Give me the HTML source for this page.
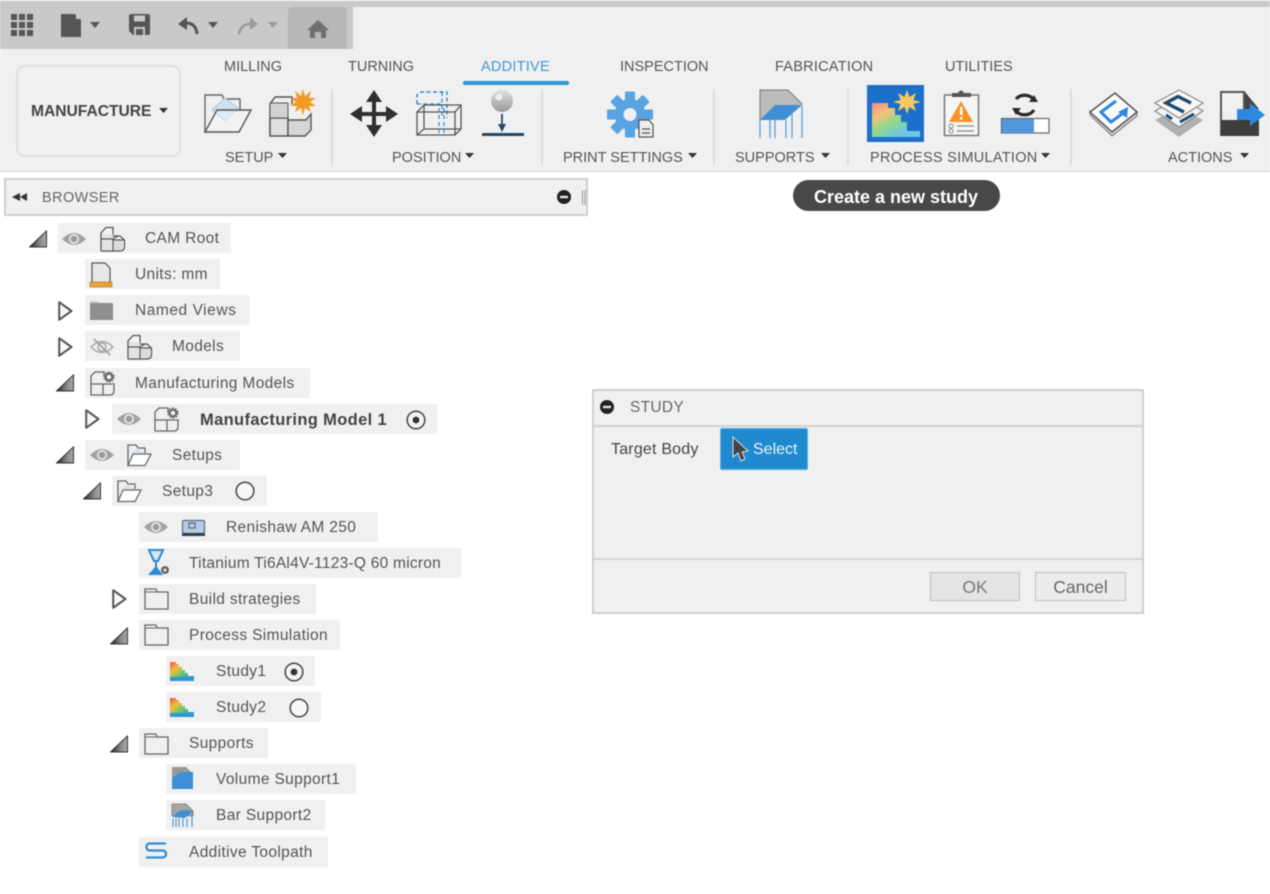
<!DOCTYPE html>
<html><head><meta charset="utf-8"><title>Manufacture - Additive</title>
<style>
html,body{margin:0;padding:0;background:#fff}
#w{position:relative;width:1270px;height:894px;overflow:hidden;background:#fff;font-family:"Liberation Sans",Arial,sans-serif;color:#555;font-size:14.5px;filter:blur(.45px)}
#w div{position:absolute;box-sizing:border-box}
.l{white-space:nowrap;line-height:18px;color:#555}
.r{background:#f0f0f0;height:30px}
.r span{position:absolute;top:1px;line-height:30px;white-space:nowrap;color:#555;font-size:15.5px;letter-spacing:.35px}
svg{position:absolute;left:0;top:0}
</style></head><body><div id="w">
<div style="left:0;top:0;width:1270px;height:172px;background:#f0f0f0;border-bottom:1px solid #d2d2d2"></div>
<div style="left:0;top:1px;width:1270px;height:6px;background:#c9c9c9"></div>
<div style="left:0;top:1px;width:353px;height:48px;background:#c9c9c9"></div>
<div style="left:288px;top:7px;width:59px;height:42px;background:#b7b7b7;border-radius:4px 4px 0 0"></div>
<div style="left:16px;top:65px;width:165px;height:92px;border:2px solid #dedede;border-radius:9px"></div>
<div class="l" style="left:31px;top:103px;font-weight:bold;font-size:15.6px;color:#444">MANUFACTURE</div>
<div class="l" style="left:224px;top:58px">MILLING</div>
<div class="l" style="left:348px;top:58px">TURNING</div>
<div class="l" style="left:481px;top:58px;color:#3d9ad6;letter-spacing:.25px">ADDITIVE</div>
<div style="left:463px;top:81px;width:106px;height:4px;background:#2e97d4;border-radius:2px"></div>
<div class="l" style="left:620px;top:58px">INSPECTION</div>
<div class="l" style="left:775px;top:58px;letter-spacing:.25px">FABRICATION</div>
<div class="l" style="left:945px;top:58px">UTILITIES</div>
<div class="l" style="left:225px;top:149px">SETUP</div>
<div class="l" style="left:392px;top:149px">POSITION</div>
<div class="l" style="left:563px;top:149px">PRINT SETTINGS</div>
<div class="l" style="left:735px;top:149px">SUPPORTS</div>
<div class="l" style="left:870px;top:149px;letter-spacing:.28px">PROCESS SIMULATION</div>
<div class="l" style="left:1168px;top:149px">ACTIONS</div>
<div style="left:4px;top:178px;width:584px;height:38px;background:#f0f0f0;border:2px solid #cfcfcf"></div>
<div class="l" style="left:42px;top:189px;color:#666;letter-spacing:.4px">BROWSER</div>
<div style="left:793px;top:180px;width:207px;height:31px;background:#484848;border-radius:16px"></div>
<div class="l" style="left:814px;top:188px;color:#fff;font-weight:bold;font-size:18px">Create a new study</div>

<div class="r" style="left:58px;top:223px;width:173px"><span style="left:87px">CAM Root</span></div>
<div class="r" style="left:85px;top:259px;width:135px"><span style="left:50px">Units: mm</span></div>
<div class="r" style="left:85px;top:295px;width:165px"><span style="left:50px;letter-spacing:.55px">Named Views</span></div>
<div class="r" style="left:85px;top:331px;width:155px"><span style="left:87px">Models</span></div>
<div class="r" style="left:85px;top:368px;width:225px"><span style="left:50px">Manufacturing Models</span></div>
<div class="r" style="left:112px;top:404px;width:325px"><span style="left:88px;font-weight:bold;color:#444;font-size:16.5px;letter-spacing:.35px">Manufacturing Model 1</span></div>
<div class="r" style="left:85px;top:440px;width:155px"><span style="left:87px">Setups</span></div>
<div class="r" style="left:112px;top:476px;width:155px"><span style="left:50px">Setup3</span></div>
<div class="r" style="left:139px;top:512px;width:239px"><span style="left:87px">Renishaw AM 250</span></div>
<div class="r" style="left:139px;top:548px;width:322px"><span style="left:50px;letter-spacing:.25px">Titanium Ti6Al4V-1123-Q 60 micron</span></div>
<div class="r" style="left:139px;top:584px;width:177px"><span style="left:50px">Build strategies</span></div>
<div class="r" style="left:139px;top:620px;width:201px"><span style="left:50px">Process Simulation</span></div>
<div class="r" style="left:166px;top:656px;width:149px"><span style="left:50px">Study1</span></div>
<div class="r" style="left:166px;top:692px;width:155px"><span style="left:50px">Study2</span></div>
<div class="r" style="left:139px;top:728px;width:129px"><span style="left:50px">Supports</span></div>
<div class="r" style="left:166px;top:764px;width:190px"><span style="left:50px">Volume Support1</span></div>
<div class="r" style="left:166px;top:800px;width:159px"><span style="left:50px">Bar Support2</span></div>
<div class="r" style="left:139px;top:837px;width:189px"><span style="left:50px">Additive Toolpath</span></div>

<div style="left:592px;top:389px;width:552px;height:225px;background:#f0f0f0;border:2px solid #d0d0d0"></div>
<div style="left:594px;top:425px;width:548px;height:2px;background:#d0d0d0"></div>
<div style="left:594px;top:558px;width:548px;height:2px;background:#d4d4d4"></div>
<div class="l" style="left:630px;top:399px;color:#666;font-size:15.5px;letter-spacing:.3px">STUDY</div>
<div class="l" style="left:611px;top:441px;color:#444;font-size:16px;letter-spacing:.2px">Target Body</div>
<div style="left:720px;top:428px;width:88px;height:42px;background:#1f8ad0;border-radius:2px;border:1px solid #5aaee0"></div>
<div class="l" style="left:753px;top:441px;color:#e8f4fc;font-size:16px">Select</div>
<div style="left:930px;top:572px;width:90px;height:29px;background:#e4e4e4;border:1px solid #bdbdbd;text-align:center;line-height:28px;font-size:17.5px;color:#777">OK</div>
<div style="left:1035px;top:572px;width:91px;height:29px;background:#ececec;border:1px solid #bdbdbd;text-align:center;line-height:28px;font-size:17.5px;color:#666">Cancel</div>

<svg width="1270" height="894" viewBox="0 0 1270 894" xmlns="http://www.w3.org/2000/svg">
<defs>
<linearGradient id="tg2" x1="0" y1="0" x2="1" y2="0"><stop offset="0" stop-color="#222"/><stop offset=".6" stop-color="#888"/><stop offset="1" stop-color="#aaa"/></linearGradient>
<linearGradient id="st" x1="0" y1="0" x2="1" y2="1"><stop offset="0" stop-color="#e8524a"/><stop offset=".3" stop-color="#f0c040"/><stop offset=".55" stop-color="#6cc66a"/><stop offset=".85" stop-color="#2c9ad8"/></linearGradient>
<linearGradient id="big" x1="0" y1="0" x2=".8" y2="1"><stop offset="0" stop-color="#f58a80"/><stop offset=".3" stop-color="#f7c27a"/><stop offset=".55" stop-color="#8fd88a"/><stop offset=".85" stop-color="#70c6e8"/></linearGradient>
<linearGradient id="ball" x1="0" y1="0" x2="0" y2="1"><stop offset="0" stop-color="#e0e0e0"/><stop offset="1" stop-color="#9a9a9a"/></linearGradient>
<symbol id="exp" width="18" height="18" viewBox="0 0 18 18"><path d="M.5 17H17.500V.8Z" fill="url(#tg2)" stroke="#333" stroke-width="1" stroke-linejoin="round"/></symbol>
<symbol id="col" width="15" height="20" viewBox="0 0 15 20"><path d="M1.200 1.200L13.500 10L1.200 18.800Z" fill="#f8f8f8" stroke="#555" stroke-width="2" stroke-linejoin="round"/></symbol>
<symbol id="eye" width="24" height="16" viewBox="0 0 24 16"><path d="M0 8Q12 -4 24 8Q12 20 0 8Z" fill="#a3a3a3"/><circle cx="12" cy="8" r="5" fill="#e6e6e6"/><circle cx="12" cy="8" r="3.200" fill="#999"/></symbol>
<symbol id="eyeoff" width="24" height="18" viewBox="0 0 24 18"><path d="M1 9Q12 -2 23 9Q12 20 1 9Z" fill="none" stroke="#a8a8a8" stroke-width="1.500"/><circle cx="12" cy="9" r="4" fill="none" stroke="#a8a8a8" stroke-width="1.500"/><path d="M4 1L20 17" stroke="#a0a0a0" stroke-width="1.600"/></symbol>
<symbol id="cube" width="26" height="26" viewBox="0 0 26 26"><path d="M1 25V7L6 1.500H13V11" fill="#f4f4f4" stroke="#555" stroke-width="1.300"/><path d="M2 8H13V13H2Z" fill="#e4e4e4"/><path d="M2 14H12V24H2Z" fill="#e4e4e4"/><path d="M14 15H23V24H14Z" fill="#dcdcdc"/><path d="M1 25H20Q24.500 25 24.500 20V14L20 10H13M1 13H13V25M13 13L18 10M13 14H24" fill="none" stroke="#555" stroke-width="1.200"/></symbol>
<symbol id="mfg" width="25" height="25" viewBox="0 0 25 25"><path d="M1 24V5L5 1H14V6M1 13H23M13 13V24M1 24H20Q24 24 24 19V12" fill="none" stroke="#666" stroke-width="1.300"/><circle cx="19" cy="6" r="3.400" fill="none" stroke="#666" stroke-width="2.200"/><circle cx="19" cy="6" r="5" fill="none" stroke="#666" stroke-width="1.400" stroke-dasharray="1.600 1.600"/></symbol>
<symbol id="open" width="25" height="23" viewBox="0 0 25 23"><path d="M1 22V1H9L11 4H18V9" fill="none" stroke="#666" stroke-width="1.300"/><path d="M6 10H24L18 21.500H1Z" fill="#fff" stroke="#666" stroke-width="1.300"/><path d="M5 9L11 4L17 9" fill="#d7e4ef"/></symbol>
<symbol id="fold" width="25" height="22" viewBox="0 0 25 22"><path d="M1 21V1H12L13 4H24V21Z" fill="none" stroke="#666" stroke-width="1.300"/><path d="M1 4H13" stroke="#666" stroke-width="1"/></symbol>
<symbol id="study" width="25" height="19" viewBox="0 0 25 19"><path d="M0 0H6V2H9V5H12V8H15V11H18V14H24V19H0Z" fill="url(#st)"/><path d="M0 15H24V19H0Z" fill="#2d97cf"/></symbol>
<symbol id="ron" width="20" height="20" viewBox="0 0 20 20"><circle cx="10" cy="10" r="8.800" fill="#f4f4f4" stroke="#444" stroke-width="1.500"/><circle cx="10" cy="10" r="3.400" fill="#333"/></symbol>
<symbol id="roff" width="20" height="20" viewBox="0 0 20 20"><circle cx="10" cy="10" r="8.800" fill="#f8f8f8" stroke="#444" stroke-width="1.500"/></symbol>
<symbol id="minus" width="14" height="14" viewBox="0 0 14 14"><circle cx="7" cy="7" r="7" fill="#222"/><rect x="3" y="5.800" width="8" height="2.400" fill="#e6e6e6"/></symbol>
</defs>

<g fill="#555"><rect x="11" y="14" width="6" height="6"/><rect x="19" y="14" width="6" height="6"/><rect x="27" y="14" width="6" height="6"/><rect x="11" y="22" width="6" height="6"/><rect x="19" y="22" width="6" height="6"/><rect x="27" y="22" width="6" height="6"/><rect x="11" y="30" width="6" height="6"/><rect x="19" y="30" width="6" height="6"/><rect x="27" y="30" width="6" height="6"/>
<path d="M61 14H75L81 20V37H61Z"/><path d="M76 14L81 19H76Z" fill="#c9c9c9"/>
<path d="M90 22H100L95 28Z"/>
<path d="M129 16Q129 14 131 14H148Q150 14 150 16V33Q150 35 148 35H133L129 31Z"/></g>
<rect x="134" y="15.500" width="11" height="6" fill="#c9c9c9"/><path d="M135 35V28H144V35" fill="none" stroke="#c9c9c9" stroke-width="2"/>
<path d="M186 23Q196 23 197 34" fill="none" stroke="#555" stroke-width="3"/><path d="M187 17L178 24L187 30Z" fill="#555"/>
<path d="M208 22H218L213 28Z" fill="#555"/>
<path d="M250 17L258 24L250 30Z" fill="#9a9a9a"/><path d="M250 24Q241 24 239 34" fill="none" stroke="#9a9a9a" stroke-width="2.500"/>
<path d="M268 22H278L273 28Z" fill="#9a9a9a"/>
<path d="M318 20L329 30H326V38H321V32H315V38H310V30H307Z" fill="#6f6f6f"/>

<g fill="#333"><path d="M159 108H168L163.500 113Z"/><path d="M278 153H287L282.500 158Z"/><path d="M465 153H474L469.500 158Z"/><path d="M688 153H697L692.500 158Z"/><path d="M821 153H830L825.500 158Z"/><path d="M1041 153H1050L1045.500 158Z"/><path d="M1240 153H1249L1244.500 158Z"/></g>
<g fill="#dcdcdc"><rect x="331" y="89" width="2" height="76"/><rect x="541" y="89" width="2" height="76"/><rect x="713" y="89" width="2" height="76"/><rect x="847" y="89" width="2" height="76"/><rect x="1070" y="89" width="2" height="76"/></g>

<path d="M205 133V95H222L224 99H240V110" fill="none" stroke="#666" stroke-width="1.400"/>
<path d="M212 110L225 98L238 108L225 121Z" fill="#cfe0ee" stroke="#aac6dc" stroke-width="1"/>
<path d="M217 110H251L239 132H205Z" fill="#f4f4f4" fill-opacity=".55" stroke="#555" stroke-width="1.400"/>
<path d="M270 136V104L275 97H292V104" fill="none" stroke="#555" stroke-width="1.500"/>
<path d="M270 118H288V136H270Z" fill="#e0e0e0" stroke="#555" stroke-width="1.400"/>
<path d="M270 103H288V118H270Z" fill="#d2d2d2" stroke="#555" stroke-width="1"/>
<path d="M288 120H306L311 114V130L305 136H288Z" fill="#d6d6d6" stroke="#555" stroke-width="1.400"/>
<path d="M303 89L305 96L311 91L309 98L316 98L310 102L316 106L309 106L311 112L305 108L303 115L301 108L295 112L297 106L290 106L296 102L290 98L297 98L295 91L301 96Z" fill="#f39a22"/>

<g fill="#2f2f2f"><path d="M374 90L382 102H366Z"/><path d="M374 137L382 125H366Z"/><path d="M350 114L362 106V122Z"/><path d="M398 114L386 106V122Z"/><rect x="372" y="100" width="4" height="28"/><rect x="360" y="112" width="28" height="4"/></g>
<path d="M417 104V95L421 92H447V118" fill="none" stroke="#2b85d8" stroke-width="1.400" stroke-dasharray="4 2.500"/>
<path d="M442 92V116M417 104H442" fill="none" stroke="#2b85d8" stroke-width="1.200" stroke-dasharray="4 2.500"/>
<path d="M417 135V112L424 105H461V129L455 135ZM417 112H455V135M455 112L461 105M417 135L424 129H461M424 105V129" fill="none" stroke="#555" stroke-width="1.300"/>
<path d="M439 108V133M444 108V133" stroke="#2b85d8" stroke-width="1.200" stroke-dasharray="4 3"/>
<circle cx="502" cy="101" r="11" fill="url(#ball)"/><circle cx="499" cy="97" r="3.500" fill="#eee"/>
<path d="M502 114V128" stroke="#1d4a6c" stroke-width="1.800"/><path d="M498 124H506L502 132Z" fill="#1d4a6c"/><rect x="482" y="133" width="42" height="3" fill="#1d4a6c"/>

<g transform="translate(630 114.500)"><circle r="15.500" fill="#58a3e2"/><g fill="#58a3e2"><rect x="-5" y="-23" width="10" height="10" rx="1"/><rect x="-5" y="13" width="10" height="10" rx="1"/><rect x="-23" y="-5" width="10" height="10" rx="1"/><rect x="13" y="-5" width="10" height="10" rx="1"/><rect x="-5" y="-23" width="10" height="10" rx="1" transform="rotate(45)"/><rect x="-5" y="13" width="10" height="10" rx="1" transform="rotate(45)"/><rect x="-23" y="-5" width="10" height="10" rx="1" transform="rotate(45)"/><rect x="13" y="-5" width="10" height="10" rx="1" transform="rotate(45)"/></g><circle r="6.500" fill="#f0f0f0"/></g>
<path d="M639 120H649L653 125V137H639Z" fill="#eee" stroke="#555" stroke-width="1.200"/><path d="M642 129H650M642 133H650" stroke="#555" stroke-width="1.200"/>

<path d="M760 90H788L802 104L785 119H760Z" fill="#bcbcbc" stroke="#777" stroke-width="1"/>
<path d="M775 105H802L785 120H760Z" fill="#3e8fd6"/>
<g stroke="#5ba6df" stroke-width="1.400" fill="none"><path d="M760 120V138M770 120V138M775 120V138M786 120V138M802 106V138M792 114V138"/></g>

<rect x="867" y="85" width="57" height="57" fill="#1d70c9"/>
<path d="M872 103H888V108H895V115H901V122H907V131H920V137H872Z" fill="url(#big)"/>
<path d="M907 90L909.500 97L916 93L913.500 100L921 102L913.500 104L916 111L909.500 107L907 114L904.500 107L898 111L900.500 104L893 102L900.500 100L898 93L904.500 97Z" fill="#f6c862"/><circle cx="907" cy="102" r="5" fill="#f6c862"/>
<rect x="944.500" y="95" width="34" height="40.500" fill="#f5f5f5" stroke="#777" stroke-width="1.500"/>
<path d="M952 97V93H958Q961 88 964 93H971V97Z" fill="#555"/>
<path d="M961 101L973 122H949Z" fill="#f4952a"/><rect x="960" y="107" width="2.500" height="8" fill="#fff"/><rect x="960" y="117" width="2.500" height="2.500" fill="#fff"/>
<path d="M957 126H974M957 131H974" stroke="#888" stroke-width="1.200"/><circle cx="951" cy="126" r="2" fill="none" stroke="#888"/><circle cx="951" cy="131" r="2" fill="none" stroke="#888"/>
<path d="M1016 99A11 10 0 0 1 1034 100M1034 110A11 10 0 0 1 1016 111" fill="none" stroke="#2a2a2a" stroke-width="3.200"/><path d="M1029 102H1038L1034 95Z" fill="#2a2a2a"/><path d="M1012 108H1021L1016 115Z" fill="#2a2a2a"/>
<rect x="1001.500" y="118.500" width="47.500" height="14.500" fill="#fff" stroke="#666" stroke-width="1.200"/><rect x="1002" y="119" width="32" height="14" fill="#5299dc"/>

<path d="M1090 115L1112 136L1137 116V112L1112 131L1090 111Z" fill="#d0d0d0" stroke="#777" stroke-width="1"/>
<path d="M1090 112L1115 93L1137 112L1112 132Z" fill="#fafafa" stroke="#555" stroke-width="1.500" stroke-linejoin="round"/>
<path d="M1116 101L1101 112L1111 122L1122 114" fill="none" stroke="#2e86e0" stroke-width="3"/><path d="M1128 107L1127 118L1118 112Z" fill="#2e86e0"/>
<path d="M1155 120L1179 108L1203 120L1179 137Z" fill="#b0b0b0"/>
<path d="M1155 111L1179 97L1203 111L1179 127Z" fill="#f4f4f4" stroke="#888" stroke-width="1.200"/>
<path d="M1155 103L1179 90L1203 103L1179 118Z" fill="#f8f8f8" stroke="#888" stroke-width="1.200"/>
<path d="M1191 103L1178 96.500L1166 103L1184 112" fill="none" stroke="#1d4a6c" stroke-width="3.400"/>
<path d="M1166 115L1172 119M1180 122L1194 114" fill="none" stroke="#1d4a6c" stroke-width="3"/>
<path d="M1221 136V92H1244V118" fill="none" stroke="#555" stroke-width="2"/><path d="M1245 92L1259 109H1245Z" fill="#444"/>
<path d="M1221 120H1259V136H1221Z" fill="#3d3d3d"/>
<path d="M1237 109H1250V103L1265 115L1250 126V120H1237Z" fill="#2d88e2"/>

<path d="M20 193V201L12 197ZM27 193V201L20 197Z" fill="#333"/>
<use href="#minus" x="557" y="190"/>
<path d="M582.500 190V205M585 190V205" stroke="#999" stroke-width="1"/>
<use href="#minus" x="600" y="400"/>
<path d="M733 437L733 457L738 453L741 461L745 459L742 452L748 451Z" fill="#444" stroke="#ddd" stroke-width="1"/>

<use href="#exp" x="29" y="230"/>
<use href="#col" x="58" y="301"/>
<use href="#col" x="58" y="337"/>
<use href="#exp" x="56" y="374"/>
<use href="#col" x="85" y="409"/>
<use href="#exp" x="56" y="446"/>
<use href="#exp" x="83" y="482"/>
<use href="#col" x="112" y="589"/>
<use href="#exp" x="110" y="627"/>
<use href="#exp" x="110" y="735"/>

<use href="#eye" x="62" y="231"/>
<use href="#cube" x="100" y="226"/>
<path d="M92 263H105L110 268V283H92Z" fill="#e8e8e8" stroke="#555" stroke-width="1.200"/><rect x="90" y="282" width="22" height="5" fill="#e8a33a" stroke="#a86f10" stroke-width=".6"/>
<path d="M90 301H97L99 303H113V320H90Z" fill="#8f8f8f"/><rect x="90" y="301" width="8" height="2" fill="#ccc"/>
<use href="#eyeoff" x="90" y="338"/>
<use href="#cube" x="127" y="334"/>
<use href="#mfg" x="90" y="371"/>
<use href="#eye" x="117" y="411"/>
<use href="#mfg" x="154" y="407"/>
<use href="#ron" x="406" y="410"/>
<use href="#eye" x="90" y="447"/>
<use href="#open" x="127" y="444"/>
<use href="#open" x="117" y="480"/>
<use href="#roff" x="235" y="481"/>
<use href="#eye" x="144" y="519"/>
<rect x="182.500" y="520.500" width="22" height="13" rx="1.500" fill="#b9cbe0" stroke="#56688a" stroke-width="1.200"/><rect x="189" y="523" width="6" height="5" fill="none" stroke="#3f5a80"/><rect x="182" y="533" width="23" height="3" fill="#333f55"/>
<path d="M149 550H163L158 561H154Z" fill="#d4e6f5" stroke="#2f87d2" stroke-width="2"/><path d="M155 561H157V567H155Z" fill="#2f87d2"/><path d="M148 575L156 566L163 575Z" fill="#2f87d2"/><circle cx="165" cy="570" r="4" fill="#666"/><circle cx="165" cy="570" r="1.500" fill="#eee"/>
<use href="#fold" x="144" y="588"/>
<use href="#fold" x="144" y="624"/>
<use href="#study" x="170" y="662"/>
<use href="#ron" x="284" y="662"/>
<use href="#study" x="170" y="698"/>
<use href="#roff" x="289" y="698"/>
<use href="#fold" x="144" y="733"/>
<path d="M172 767H186L193 774V781H172Z" fill="#999"/><path d="M172 778L181 772H193V789H172Z" fill="#3e8fd6"/>
<path d="M172 804H186L193 811V816H172Z" fill="#a5a5a5" stroke="#777" stroke-width=".8"/><path d="M173 817Q178 808 193 811L185 818Z" fill="#3e8fd6"/><path d="M173 818V827M176 818V827M179 818V827M183 818V827M187 818V827M192 813V827" stroke="#4d94d2" stroke-width="1.100"/>
<path d="M166 843.500H150Q146.500 843.500 146.500 847T150 850.500H162Q166 850.500 166 854T162 857.500H146" fill="none" stroke="#2f8fd4" stroke-width="2.200"/>
</svg>
</div></body></html>
